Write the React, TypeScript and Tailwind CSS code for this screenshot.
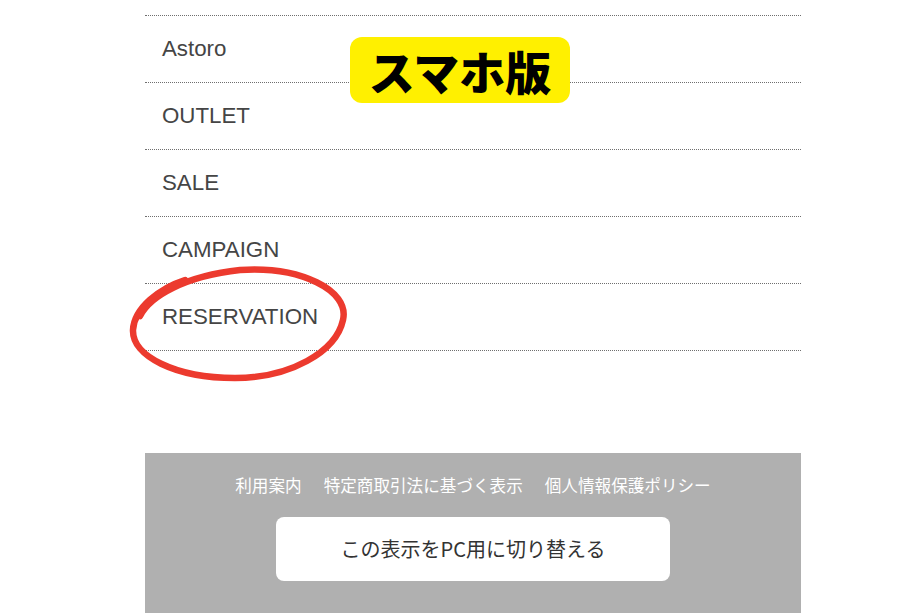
import React from "react";

const items = ["Astoro", "OUTLET", "SALE", "CAMPAIGN", "RESERVATION"];

export default function App() {
  return (
    <div className="relative w-[920px] h-[613px] overflow-hidden bg-white" style={{ fontFamily: '"Liberation Sans", "Noto Sans CJK JP", sans-serif' }}>
      <div className="ml-[145px] w-[656px]">
        <div className="h-[16px] border-b border-dotted border-[#6f6f6f]" />
        {items.map((t) => (
          <div key={t} className="h-[67px] flex items-center pl-[17px] pb-[1px] border-b border-dotted border-[#6f6f6f] text-[22.3px] text-[#454545]">
            {t}
          </div>
        ))}
        <div className="h-[102px]" />
        <div className="bg-[#b0b0b0] h-[160px] flex flex-col items-center pt-[21px]" style={{ fontFamily: '"Noto Sans CJK JP", sans-serif' }}>
          <div className="flex gap-[22px] text-[16.6px] text-white leading-[22px]">
            <span>利用案内</span>
            <span>特定商取引法に基づく表示</span>
            <span>個人情報保護ポリシー</span>
          </div>
          <div className="mt-[21px] w-[394px] h-[64px] bg-white rounded-[8px] flex items-center justify-center text-[20px] text-[#333]">
            この表示をPC用に切り替える
          </div>
        </div>
      </div>

      <div className="absolute left-[350px] top-[37px] w-[220px] h-[66px] bg-[#fff000] rounded-[12px] flex items-center justify-center text-[46px] font-black text-black leading-none" style={{ fontFamily: '"Noto Sans CJK JP", sans-serif' }}>
        スマホ版
      </div>

      <svg className="absolute left-0 top-0 pointer-events-none" width="920" height="613" viewBox="0 0 920 613">
        <path
          d="M 140 316 C 150 296, 185 276, 240 270 C 300 266, 350 290, 343 320 C 336 352, 290 378, 235 378 C 175 378, 132 356, 133 330 C 134 308, 160 288, 185 280"
          fill="none"
          stroke="#ec3a2e"
          strokeWidth="6.5"
          strokeLinecap="round"
        />
      </svg>
    </div>
  );
}
